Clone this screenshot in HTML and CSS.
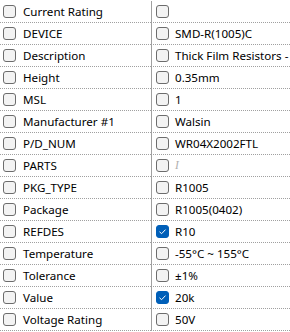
FILE: index.html
```
<!DOCTYPE html>
<html lang="en">
<head>
    <meta charset="UTF-8">
    <meta name="viewport" content="width=device-width, initial-scale=1.0">
    <title>Properties</title>
    <link rel="stylesheet" href="styles.css">
</head>
<body>
    <div class="grid">
        <div class="cell"><span class="chk"></span><span class="txt">Current Rating</span></div>
        <div class="cell val"><span class="chk"></span><span class="txt"></span></div>

        <div class="cell"><span class="chk"></span><span class="txt">DEVICE</span></div>
        <div class="cell val"><span class="chk"></span><span class="txt">SMD-R(1005)C</span></div>

        <div class="cell"><span class="chk"></span><span class="txt">Description</span></div>
        <div class="cell val"><span class="chk"></span><span class="txt">Thick Film Resistors -</span></div>

        <div class="cell"><span class="chk"></span><span class="txt">Height</span></div>
        <div class="cell val"><span class="chk"></span><span class="txt">0.35mm</span></div>

        <div class="cell"><span class="chk"></span><span class="txt">MSL</span></div>
        <div class="cell val"><span class="chk"></span><span class="txt">1</span></div>

        <div class="cell"><span class="chk"></span><span class="txt">Manufacturer #1</span></div>
        <div class="cell val"><span class="chk"></span><span class="txt">Walsin</span></div>

        <div class="cell"><span class="chk"></span><span class="txt">P/D_NUM</span></div>
        <div class="cell val"><span class="chk"></span><span class="txt">WR04X2002FTL</span></div>

        <div class="cell"><span class="chk"></span><span class="txt">PARTS</span></div>
        <div class="cell val"><span class="chk"></span><span class="txt empty">I</span></div>

        <div class="cell"><span class="chk"></span><span class="txt">PKG_TYPE</span></div>
        <div class="cell val"><span class="chk"></span><span class="txt">R1005</span></div>

        <div class="cell"><span class="chk"></span><span class="txt">Package</span></div>
        <div class="cell val"><span class="chk"></span><span class="txt">R1005(0402)</span></div>

        <div class="cell"><span class="chk"></span><span class="txt">REFDES</span></div>
        <div class="cell val"><span class="chk on"><svg viewBox="0 0 13 13" width="13" height="13"><path d="M3.5 6.8 L5.6 8.7 L9.5 4.6" fill="none" stroke="#fff" stroke-width="1"/></svg></span><span class="txt">R10</span></div>

        <div class="cell"><span class="chk"></span><span class="txt">Temperature</span></div>
        <div class="cell val"><span class="chk"></span><span class="txt">-55°C ~ 155°C</span></div>

        <div class="cell"><span class="chk"></span><span class="txt">Tolerance</span></div>
        <div class="cell val"><span class="chk"></span><span class="txt">±1%</span></div>

        <div class="cell"><span class="chk"></span><span class="txt">Value</span></div>
        <div class="cell val"><span class="chk on"><svg viewBox="0 0 13 13" width="13" height="13"><path d="M3.5 6.8 L5.6 8.7 L9.5 4.6" fill="none" stroke="#fff" stroke-width="1"/></svg></span><span class="txt">20k</span></div>

        <div class="cell"><span class="chk"></span><span class="txt">Voltage Rating</span></div>
        <div class="cell val"><span class="chk"></span><span class="txt">50V</span></div>
    </div>
</body>
</html>
```
FILE: styles.css
```
html, body{
    margin: 0;
    padding: 0;
    background: #fff;
}
body{
    width: 290px;
    height: 332px;
    overflow: hidden;
    font-family: "Noto Sans", "DejaVu Sans", sans-serif;
    font-size: 11.6px;
    color: #000;
}
.grid{
    display: grid;
    grid-template-columns: 151px 139px;
    padding-top: 1px;
}
.cell{
    height: 21px;
    border-bottom: 1px dotted #a0a0a0;
    display: flex;
    align-items: center;
    padding-left: 3px;
    white-space: nowrap;
    overflow: hidden;
}
.cell.val{
    border-left: 1px solid #a0a0a0;
    padding-left: 4px;
}
.chk{
    flex: none;
    width: 13px;
    height: 13px;
    box-sizing: border-box;
    border: 1px solid #6c6c6c;
    border-radius: 3px;
    background: #f3f3f3;
    margin-right: 7px;
    position: relative;
}
.cell.val .chk{
    margin-right: 6px;
}
.chk.on{
    background: #005fb8;
    border-color: #005fb8;
}
.chk svg{
    position: absolute;
    left: -1px;
    top: -1px;
}
.txt{
    line-height: 21px;
}
.txt.empty{
    font-family: "Liberation Serif", serif;
    font-style: italic;
    color: #b0b0b0;
}
```
